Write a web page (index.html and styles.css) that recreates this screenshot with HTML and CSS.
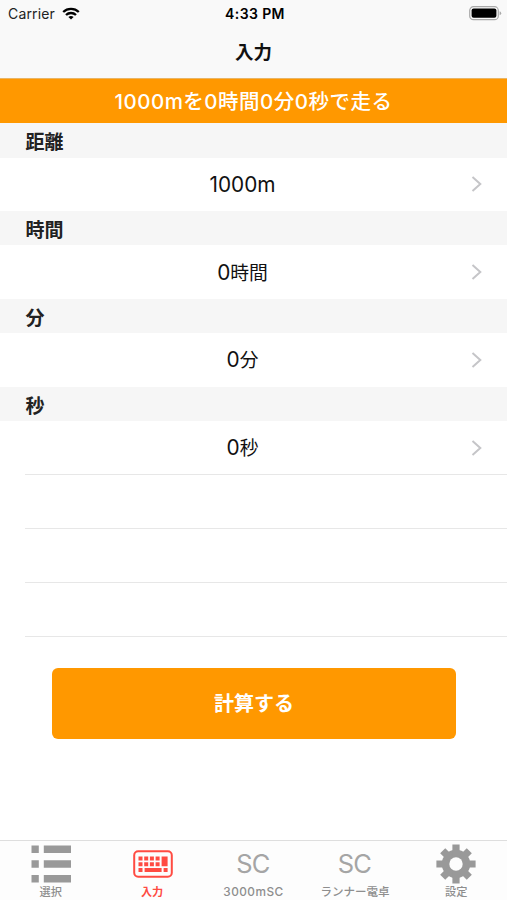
FILE: index.html
```html
<!DOCTYPE html>
<html lang="ja">
<head>
<meta charset="utf-8">
<title>入力</title>
<link rel="stylesheet" href="styles.css">
</head>
<body>
<div class="app">
  <header class="top">
    <div class="status">
      <div class="carrier"><span>Carrier</span>
        <svg class="wifi" width="18" height="13" viewBox="0 0 18 13" fill="none" stroke="#000" stroke-width="2.3"><path d="M1.2 5A11.2 11.2 0 0 1 16.8 5"/><path d="M4 8A7.2 7.2 0 0 1 14 8"/><path d="M9 12.6L6.4 10Q9 7.9 11.6 10Z" fill="#000" stroke="none"/></svg>
      </div>
      <div class="time">4:33 PM</div>
      <svg class="battery" width="33" height="15" viewBox="0 0 33 15"><rect x=".7" y=".7" width="28.6" height="13" rx="3.8" fill="none" stroke="#a9a9a9" stroke-width="1.2"/><rect x="2.6" y="2.6" width="24.8" height="9.2" rx="2" fill="#000"/><path d="M30.6 5.2Q32.2 5.8 32.2 7.2T30.6 9.2Z" fill="#a9a9a9"/></svg>
    </div>
    <h1 class="title">入力</h1>
  </header>
  <div class="banner">1000mを0時間0分0秒で走る</div>
  <main class="content">
    <section class="group"><h2 class="heading">距離</h2><div class="row"><span class="value">1000m</span><svg class="chevron" width="12" height="18" viewBox="0 0 12 18"><path d="M1.5 2L9.3 9L1.5 16"/></svg></div></section>
    <section class="group"><h2 class="heading">時間</h2><div class="row"><span class="value">0<span class="unit">時間</span></span><svg class="chevron" width="12" height="18" viewBox="0 0 12 18"><path d="M1.5 2L9.3 9L1.5 16"/></svg></div></section>
    <section class="group"><h2 class="heading">分</h2><div class="row"><span class="value">0<span class="unit">分</span></span><svg class="chevron" width="12" height="18" viewBox="0 0 12 18"><path d="M1.5 2L9.3 9L1.5 16"/></svg></div></section>
    <section class="group"><h2 class="heading">秒</h2><div class="row"><span class="value">0<span class="unit">秒</span></span><svg class="chevron" width="12" height="18" viewBox="0 0 12 18"><path d="M1.5 2L9.3 9L1.5 16"/></svg></div></section>
    <div class="empty"></div>
    <div class="empty"></div>
    <div class="empty"></div>
    <div class="empty last"></div>
    <button class="calc">計算する</button>
  </main>
  <nav class="tabs">
    <a class="tab"><span class="icon"><svg width="40" height="38" viewBox="0 0 40 38" fill="#999"><path d="M.5 .5h7.3V8H.5zM12.8 .5H40V8H12.8zM.5 15.2h7.3v7.5H.5zM12.8 15.2H40v7.5H12.8zM.5 30h7.3v7.5H.5zM12.8 30H40v7.5H12.8z"/></svg></span><span class="label">選択</span></a>
    <a class="tab active"><span class="icon"><svg class="keyboard" width="40" height="28" viewBox="0 0 40 28" fill="#ff4b42"><rect x="1.2" y="1.2" width="37.6" height="25.6" rx="4" fill="none" stroke="#ff4b42" stroke-width="2"/><path d="M5.5 6.5h4v4h-4zM11.2 6.5h4v4h-4zM16.9 6.5h4v4h-4zM22.6 6.5h4v4h-4zM5.5 12.2h4v4h-4zM11.2 12.2h4v4h-4zM16.9 12.2h4v4h-4zM22.6 12.2h4v4h-4zM28.6 6.5h6v9.7h-6zM5.5 18h4v4h-4zM11.6 18h17v4h-17zM30.6 18h4v4h-4z"/></svg></span><span class="label">入力</span></a>
    <a class="tab"><span class="icon sc">SC</span><span class="label latin">3000mSC</span></a>
    <a class="tab"><span class="icon sc">SC</span><span class="label kana">ランナー電卓</span></a>
    <a class="tab"><span class="icon"><svg width="40" height="40" viewBox="-20 -20 40 40"><g fill="#999"><circle r="14.2"/><path d="M-3.6-19.6h7.2V19.6h-7.2zM-19.6-3.6H19.6v7.2H-19.6z"/><path transform="rotate(45)" d="M-3.6-18.8h7.2V18.8h-7.2zM-18.8-3.6H18.8v7.2H-18.8z"/></g><circle r="6.7" fill="#fdfdfd"/></svg></span><span class="label">設定</span></a>
  </nav>
</div>
</body>
</html>
```

FILE: styles.css
```css
* { box-sizing: border-box; }
body { margin: 0; background: #fff; color: #111; font-family: Inter, "Noto Sans CJK JP", sans-serif; }
.app { width: 507px; height: 900px; display: flex; flex-direction: column; overflow: hidden; }
.top { height: 79px; flex: none; background: #f9f9f9; border-bottom: 1px solid #e9b565; }
.status { height: 27px; display: grid; grid-template-columns: 1fr auto 1fr; align-items: center; padding: 0 5px 0 8px; font-size: 14px; line-height: 27px; }
.carrier { display: flex; align-items: center; gap: 7px; color: #222; letter-spacing: .15px; }
.time { font-weight: 600; font-size: 14px; letter-spacing: .4px; color: #000; }
.battery { justify-self: end; }
.title { margin: 0; height: 51px; line-height: 51px; text-align: center; font-size: 18.5px; font-weight: 700; }
.banner { height: 44px; flex: none; background: #ff9800; color: #fff; text-align: center; font-size: 20.5px; line-height: 46px; font-weight: 500; letter-spacing: .5px; white-space: nowrap; }
.content { flex: 1; display: flex; flex-direction: column; }
.group { flex: none; height: 87.85px; }
.heading { margin: 0; height: 34.5px; padding-left: 25.5px; background: #f6f6f6; font-size: 19px; line-height: 39px; font-weight: 700; color: #222; }
.row { height: 53.35px; display: grid; grid-template-columns: 1fr auto 1fr; align-items: center; padding: 0 24px 0 2px; }
.value { grid-column: 2; font-size: 20.8px; line-height: 30px; padding-top: 2px; }
.unit { font-size: 18.8px; }
.chevron { justify-self: end; fill: none; stroke: #c5c5c8; stroke-width: 2; }
.empty { flex: none; height: 53.9px; margin-left: 25px; border-top: 1px solid #e7e7e7; }
.empty.last { height: 32px; }
.calc { flex: none; width: 404px; height: 71px; margin-left: 52px; padding: 0; border: 0; border-radius: 6px; background: #ff9800; color: #fff; font: 700 20px/70px Inter, "Noto Sans CJK JP", sans-serif; }
.tabs { height: 60px; flex: none; border-top: 1px solid #dedede; background: #fdfdfd; display: grid; grid-template-columns: repeat(5, 1fr); }
.tab { display: flex; flex-direction: column; align-items: center; color: #8e8e8e; padding-top: 2px; }
.icon { height: 41px; display: flex; align-items: center; justify-content: center; }
.keyboard { margin-left: 2px; }
.sc { font-size: 25.5px; font-weight: 400; color: #a5a5a5; letter-spacing: -.8px; padding-right: 1px; }
.label { font-size: 11.2px; line-height: 16px; font-weight: 500; white-space: nowrap; }
.latin { font-size: 11.8px; letter-spacing: .5px; }
.kana { font-size: 11.5px; }
.active { color: #ff4b42; }
.active .label { font-weight: 700; }
```
